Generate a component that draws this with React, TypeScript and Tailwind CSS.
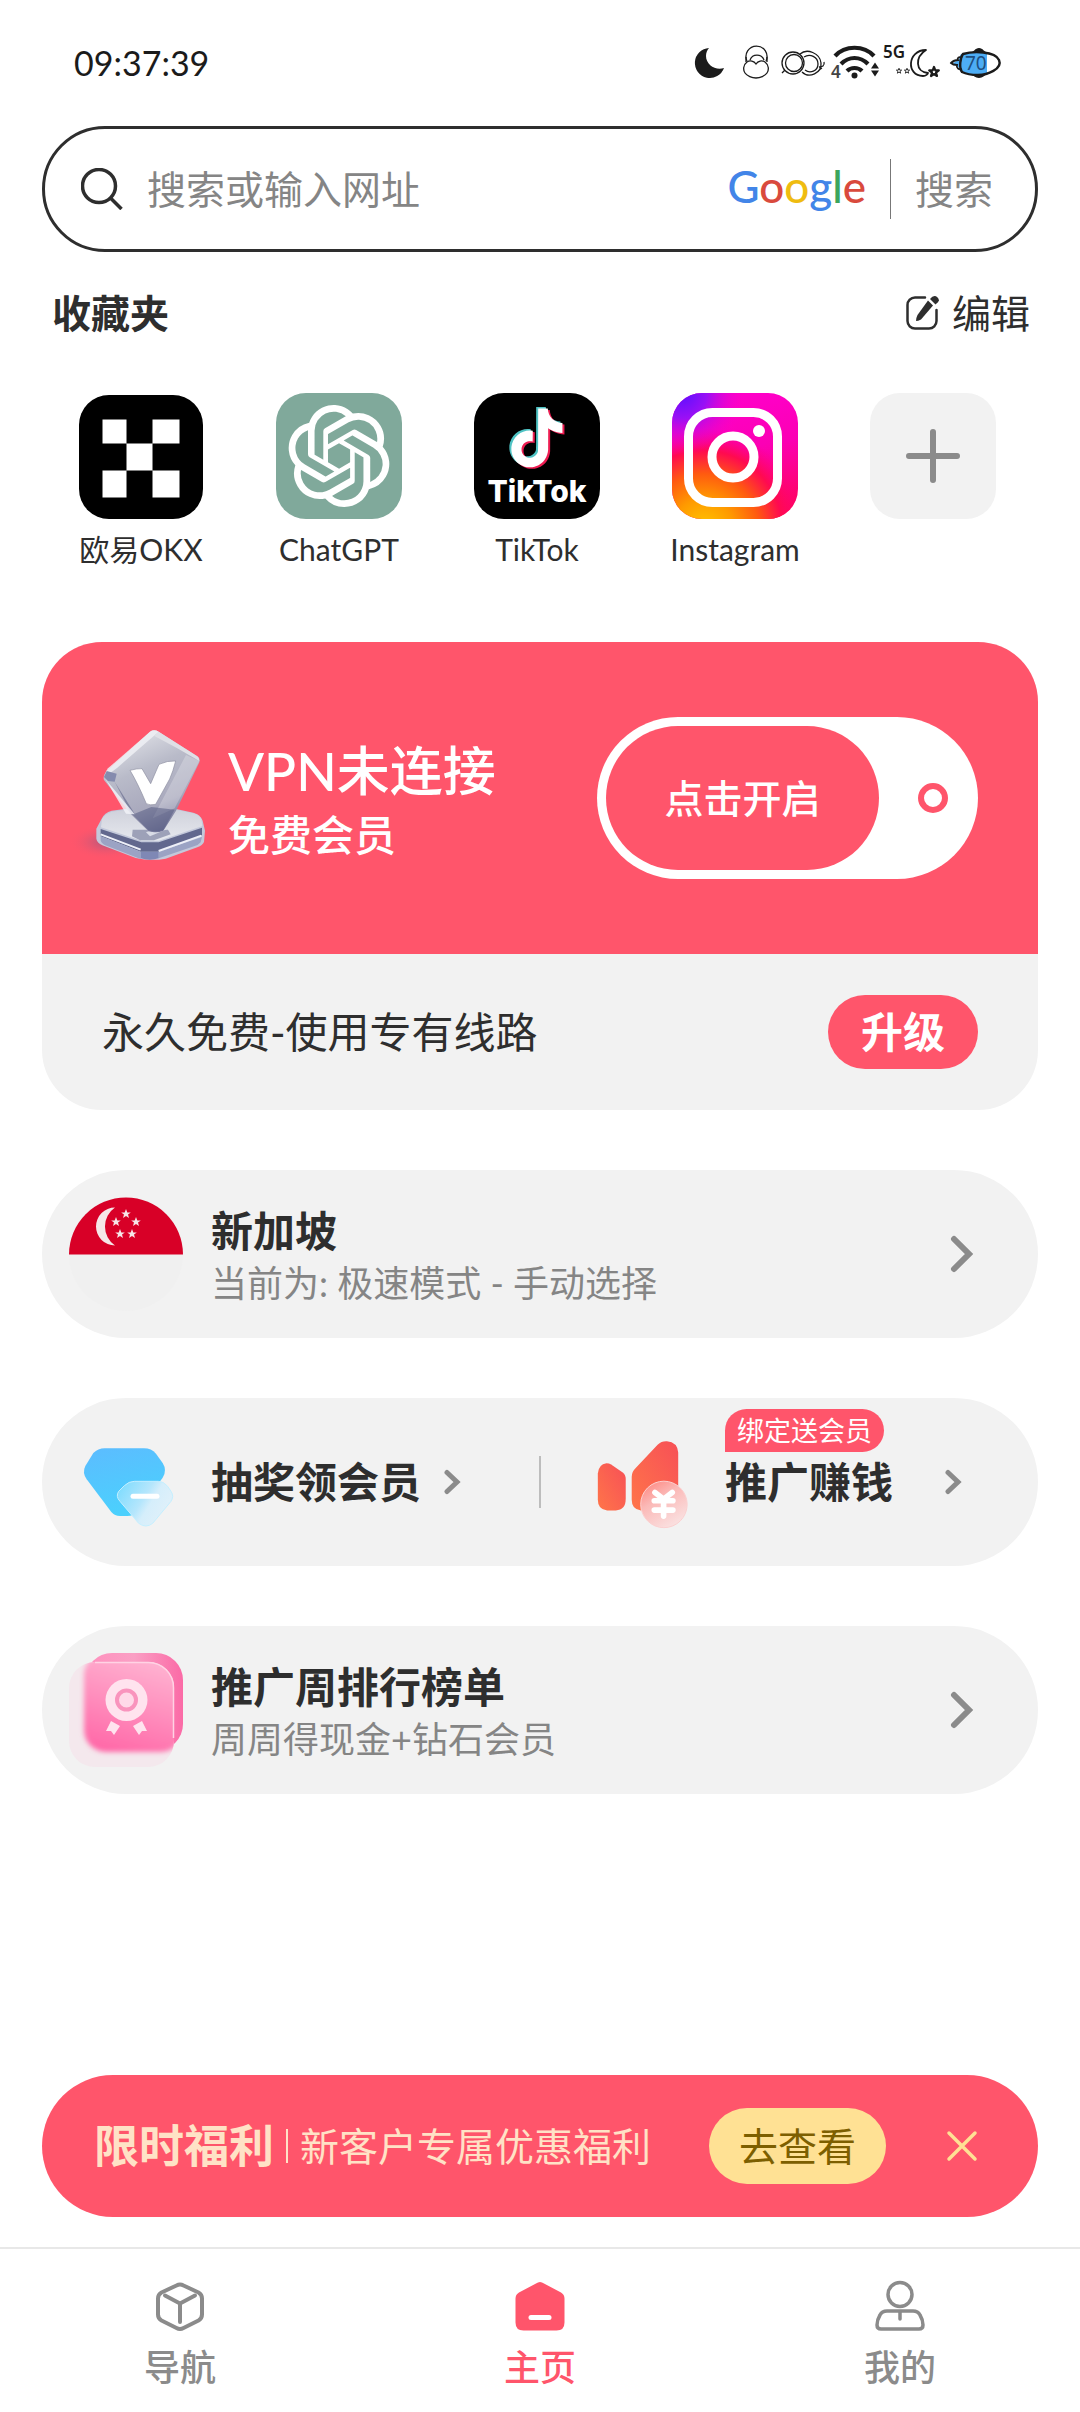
import { useState } from "react";
import type { ReactNode } from "react";
import { SiOpenai } from "react-icons/si";

const NOTE =
  "M12.525.02c1.31-.02 2.61-.01 3.91-.02.08 1.53.63 3.09 1.75 4.17 1.12 1.11 2.7 1.62 4.24 1.79v4.03c-1.44-.05-2.89-.35-4.2-.97-.57-.26-1.1-.59-1.62-.93-.01 2.92.01 5.84-.02 8.75-.08 1.4-.54 2.79-1.35 3.94-1.31 1.92-3.58 3.17-5.91 3.21-1.43.08-2.86-.31-4.08-1.03-2.02-1.19-3.44-3.37-3.65-5.71-.02-.5-.03-1-.01-1.49.18-1.9 1.12-3.72 2.58-4.96 1.66-1.44 3.98-2.13 6.15-1.72.02 1.48-.04 2.96-.04 4.44-.99-.32-2.15-.23-3.02.37-.63.41-1.11 1.04-1.36 1.75-.21.51-.15 1.07-.14 1.61.24 1.64 1.82 3.02 3.5 2.87 1.12-.01 2.19-.66 2.77-1.61.19-.33.4-.67.41-1.06.1-1.79.06-3.57.07-5.36.01-4.03-.01-8.05.02-12.07z";

const STAR = "M0-5 1.3-1.6 4.8-1.6 2 .6 3 4 0 2-3 4-2 .6-4.8-1.6-1.3-1.6z";

function StatusIcons() {
  return (
    <svg width="312" height="52" viewBox="692 36 312 52" fill="none" stroke="#1b1b1b" aria-hidden="true">
      <path d="M709 47a15 15 0 1 0 15 20c-8 3-18-3-18-12 0-3 1-6 3-8z" fill="#1b1b1b" stroke="none" />
      <g strokeWidth="1.3">
        <path d="M747 60a10.500 10.500 0 1 1 19 0M750 59a7.500 7.500 0 0 1 14 0" />
        <path d="M756 63c-2-3-6-4-9-2-4 3-4 8-2 11s7 5 11 5 9-2 11-5 2-8-2-11c-3-2-7-1-9 2z" />
        <path d="M746 56v5M767 56v5" />
        <circle cx="793" cy="62" r="11" />
        <circle cx="794" cy="62" r="8.500" />
        <path d="M800 53c7-6 20-1 21 9s-12 16-19 9M804 56c6-4 14 0 14 7s-8 10-13 6M782 72l3-3M819 66c3 0 6-1 5-5M819 69l3-2" />
      </g>
      <g strokeWidth="4.200">
        <path d="M835 55c10-11 29-11 39 0M841 63c8-8 19-8 27 0M847 70c4-4 11-4 15 0" />
      </g>
      <circle cx="854.500" cy="74.500" r="3" fill="#1b1b1b" stroke="none" />
      <path d="M871 67.500h8l-4-6zM871 69.500h8l-4 6z" fill="#1b1b1b" stroke="none" />
      <path d="M926 49c-19 0-20 26-3 26 3 0 5-2 5-3-13-1-13-16-2-23z" strokeWidth="1.800" strokeLinejoin="round" />
      <path d={STAR} transform="translate(934 71)" strokeWidth="2.200" strokeLinejoin="round" fill="#fff" />
      <path d={STAR} transform="translate(899 70) scale(.55)" strokeWidth="1.600" />
      <path d={STAR} transform="translate(907 70) scale(.55)" strokeWidth="1.600" />
      <path d="M961 53c-3 4-3 14 0 18l9 3h17V52h-17zM961 58l-8 4 8 6z" fill="#4dadf5" stroke="none" />
      <path d="M963 53c10-3 32-3 36 6s-12 15-21 15-14-2-16-3c-3-4-2-14 1-18z" strokeWidth="2.400" />
      <path d="M962 57c-3-2-5 0-4 2-4 0-6 2-7 3 2 2 4 2 6 2-1 3 2 5 5 4" strokeWidth="1.800" />
      <path d="M970 52c4-1 5-5 9-5s5 4 9 5zM970 73c4 1 5 4 9 4s5-3 9-4z" fill="#1b1b1b" stroke="none" />
      <g fill="#1b1b1b" stroke="none" className="font-['Noto_Sans',sans-serif]">
        <text x="883" y="57" fontSize="17" fontWeight="600">5G</text>
        <text x="831" y="77" fontSize="17" fontWeight="600" fill="#444">4</text>
        <text x="965" y="69" fontSize="19" fill="#1d4e80">70</text>
      </g>
    </svg>
  );
}

function OkxIcon() {
  return (
    <svg viewBox="0 0 126 126" className="size-full" aria-hidden="true">
      <rect x="1" y="2" width="124" height="124" rx="30" fill="#000" />
      <path d="M24.500 26.500h24v24h26v-24h27v24h-27v27h27v27h-27v-27h-26v27h-24v-27h24v-27h-24z" fill="#fff" />
    </svg>
  );
}

function ChatIcon() {
  return (
    <span className="flex size-full items-center justify-center rounded-[30px] bg-[#80a99b]">
      <SiOpenai className="size-[102px] text-white" />
    </span>
  );
}

function TikTokIcon() {
  return (
    <span className="flex size-full flex-col items-center rounded-[30px] bg-black pt-3">
      <svg viewBox="36 12 56 64" className="h-16 w-14" aria-hidden="true">
        <path d={NOTE} transform="translate(32.500 14) scale(2.450)" fill="#4fc3c4" />
        <path d={NOTE} transform="translate(36.500 17) scale(2.450)" fill="#ee1d52" />
        <path d={NOTE} transform="translate(34.500 15.500) scale(2.450)" fill="#fff" />
      </svg>
      <span className="font-['Inter',sans-serif] text-[30px] leading-[44px] font-extrabold text-white">TikTok</span>
    </span>
  );
}

function InstagramIcon() {
  return (
    <svg viewBox="0 0 126 126" className="size-full" aria-hidden="true">
      <defs>
        <linearGradient id="igBase" x1=".7" y1="0" x2=".9" y2="1">
          <stop offset="0" stopColor="#ff00c8" />
          <stop offset=".4" stopColor="#fb00b4" />
          <stop offset="1" stopColor="#ff0550" />
        </linearGradient>
        <radialGradient id="igWarm" cx=".25" cy="1.080" r=".8">
          <stop offset="0" stopColor="#ffc800" />
          <stop offset=".3" stopColor="#ff9a00" />
          <stop offset=".55" stopColor="#ff5a10" />
          <stop offset=".78" stopColor="#ff0a50" />
          <stop offset="1" stopColor="#ff0080" stopOpacity="0" />
        </radialGradient>
        <radialGradient id="igCool" cx=".08" cy="0" r=".5">
          <stop offset="0" stopColor="#5a10ff" />
          <stop offset=".4" stopColor="#9a10f5" />
          <stop offset="1" stopColor="#ff00c8" stopOpacity="0" />
        </radialGradient>
      </defs>
      <rect width="126" height="126" rx="30" fill="url(#igBase)" />
      <rect width="126" height="126" rx="30" fill="url(#igWarm)" />
      <rect width="126" height="126" rx="30" fill="url(#igCool)" />
      <g fill="none" stroke="#fff" strokeWidth="9">
        <rect x="16.500" y="19.500" width="89" height="90" rx="24" />
        <circle cx="61" cy="64" r="21" />
      </g>
      <circle cx="87" cy="38" r="6" fill="#fff" />
    </svg>
  );
}

function VpnBadge() {
  return (
    <svg viewBox="90 290 420 411" className="-mt-1.5 h-[137px] w-[140px] shrink-0" aria-hidden="true">
      <defs>
        <linearGradient id="vFace" x1=".2" y1="0" x2=".6" y2="1">
          <stop offset="0" stopColor="#e4e5ea" />
          <stop offset=".4" stopColor="#b9bbc9" />
          <stop offset=".75" stopColor="#a9a9bd" />
          <stop offset="1" stopColor="#6f7296" />
        </linearGradient>
        <linearGradient id="vTop" x1="0" y1="0" x2="0" y2="1">
          <stop offset="0" stopColor="#cfd1db" />
          <stop offset="1" stopColor="#e6e8ee" />
        </linearGradient>
        <radialGradient id="vShade">
          <stop offset="0" stopColor="#8b5a86" stopOpacity=".7" />
          <stop offset="1" stopColor="#ff556b" stopOpacity="0" />
        </radialGradient>
      </defs>
      <ellipse cx="200" cy="635" rx="115" ry="52" fill="url(#vShade)" />
      <path d="M185 565q8-18 30-24l60-8h120l65 14q22 6 28 24l7 30-3 34q-4 10-20 16l-95 34q-44 8-90-2l-100-38q-16-8-18-20v-30z" fill="#c3c8da" />
      <path d="M182 596l122 40h52l130-44v22l-128 50h-56l-120-46z" fill="#62688e" />
      <path d="M182 618l120 46v22l-108-42q-12-8-12-14zM356 664l130-44-4 16q-6 8-20 12l-106 36z" fill="#9ba3c4" />
      <path d="M302 664h54v20q-26 8-54 0z" fill="#7f88b5" />
      <path d="M182 612l120 46M356 662l128-46" stroke="#eef0f8" strokeWidth="6" fill="none" />
      <path d="M186 566q10-16 30-22l60-8h118l66 13q18 5 24 18l3 20-130 44h-52l-122-40z" fill="url(#vTop)" />
      <path d="M278 598h106l8 14-50 18h-42l-24-12z" fill="#9da1b8" />
      <path d="M318 606l54-20 10 10-52 22z" fill="#d9dce6" />
      <path d="M330 304q12-8 26 0l116 74q10 6 6 18l-70 145-38 60q-20 8-44 2l-52-50-82-104q-4-12 6-24z" fill="url(#vFace)" />
      <path d="M330 304q12-8 26 0l-124 108-34 26q-6-10 6-24z" fill="#eff0f5" opacity=".85" />
      <path d="M342 316l14-12 116 74q8 6 6 14-66-40-136-76z" fill="#dfe0e6" />
      <path d="M192 440l8-18 30 8-6 24-20-2z" fill="#858bae" />
      <path d="M478 392l-74 142-66 30 100-190z" fill="#fff" opacity=".24" />
      <path d="M224 454l60 96 50-20 70 8-34 60q-20 8-44 2l-52-50z" fill="#575c84" opacity=".55" />
      <path d="M196 446l88 106-26-2z" fill="#f4f5fa" opacity=".8" />
      <path d="M270 420q22-6 36-5l26 45 25-58q26-12 50-10-8 32-18 54l-42 76q-18 4-28-2-26-62-49-100z" fill="#fff" stroke="#8e90a2" strokeWidth="2" />
    </svg>
  );
}

function FlagIcon() {
  const stars = [[57, 17], [47, 25], [67, 25], [51, 37], [63, 37]];
  return (
    <svg viewBox="0 0 114 114" className="size-[114px] shrink-0" aria-hidden="true">
      <circle cx="57" cy="57" r="57" fill="#f0f0f0" />
      <path d="M0 57.500a57 57 0 0 1 114 0z" fill="#d80027" />
      <path d="M46 10.500a18.500 18.500 0 0 0 0 38a23 23 0 0 1 0-38z" fill="#f6e6e8" />
      {stars.map(([x, y]) => (
        <path key={`${x}-${y}`} d={STAR} transform={`translate(${x} ${y})`} fill="#f6e6e8" />
      ))}
    </svg>
  );
}

function GemIcon() {
  return (
    <svg viewBox="120 165 288 252" className="h-[84px] w-24" aria-hidden="true">
      <defs>
        <linearGradient id="gemBody" x1="0" y1="0" x2=".3" y2="1">
          <stop offset="0" stopColor="#5cbcff" />
          <stop offset="1" stopColor="#4bd0fd" />
        </linearGradient>
        <linearGradient id="gemGlass" x1="0" y1=".2" x2="1" y2=".7">
          <stop offset="0" stopColor="#7fdcfe" />
          <stop offset=".45" stopColor="#b5e6fc" />
          <stop offset=".6" stopColor="#d5eefb" />
          <stop offset="1" stopColor="#e3f1f9" />
        </linearGradient>
      </defs>
      <path d="M160 192q14-14 34-14h118q22 0 36 16l20 28q14 22 0 44l-76 102q-12 13-30 13h-22q-16 0-26-12l-74-98q-14-20-4-40z" fill="url(#gemBody)" />
      <path d="M253 290q14-13 30-13h72q16 0 28 15l10 15q10 15 0 30l-55 66q-20 16-42 0l-56-66q-14-15-4-30z" fill="url(#gemGlass)" stroke="#c5efff" strokeWidth="3" />
      <path d="M279 322h72" stroke="#fff" strokeWidth="15" strokeLinecap="round" />
    </svg>
  );
}

function EarnIcon() {
  return (
    <svg viewBox="160 145 300 280" className="mt-1 h-[93px] w-[100px]" aria-hidden="true">
      <defs>
        <linearGradient id="earnBody" x1="0" y1="1" x2="1" y2="0">
          <stop offset="0" stopColor="#ff7549" />
          <stop offset="1" stopColor="#f75057" />
        </linearGradient>
        <linearGradient id="earnCoin" x1="0" y1="0" x2=".6" y2="1">
          <stop offset="0" stopColor="#ff8078" />
          <stop offset=".45" stopColor="#fbb9b7" />
          <stop offset="1" stopColor="#fadfdf" />
        </linearGradient>
      </defs>
      <path d="M174 252q2-28 26-31 8 0 14 4l35 24q9 7 9 19v60q0 34-30 35h-26q-28-2-28-32z" fill="url(#earnBody)" />
      <path d="M276 262q0-16 12-27l66-70q12-11 28-10 32 3 34 34v174h-112q-28-2-28-32z" fill="url(#earnBody)" />
      <circle cx="373" cy="345" r="70" fill="url(#earnCoin)" stroke="#fbd0d0" strokeWidth="3" />
      <path d="M346 309l26 20 26-20M344 334h56M344 362h56M372 332v48" stroke="#fff" strokeWidth="17" strokeLinecap="round" strokeLinejoin="round" fill="none" />
    </svg>
  );
}

function MedalIcon() {
  return (
    <svg viewBox="0 0 114 114" className="size-[114px] shrink-0" aria-hidden="true">
      <defs>
        <linearGradient id="medBack" x1="0" y1="0" x2="1" y2="0">
          <stop offset="0" stopColor="#ff8fbd" />
          <stop offset=".5" stopColor="#fa9fc4" />
          <stop offset="1" stopColor="#fb6aa6" />
        </linearGradient>
        <linearGradient id="medFront" x1=".6" y1="0" x2=".3" y2="1">
          <stop offset="0" stopColor="#ffb6d3" />
          <stop offset=".5" stopColor="#ff90be" />
          <stop offset="1" stopColor="#ff69a8" />
        </linearGradient>
        <clipPath id="medClip"><rect y="9" width="105" height="105" rx="26" /></clipPath>
        <filter id="medSoft" x="-20%" y="-20%" width="140%" height="140%"><feGaussianBlur stdDeviation="2.500" /></filter>
      </defs>
      <rect x="16" width="98" height="98" rx="27" fill="url(#medBack)" />
      <g clipPath="url(#medClip)">
        <rect y="9" width="105" height="105" fill="#f4e8ed" />
        <rect x="15" y="0" width="99" height="99" rx="22" fill="url(#medFront)" filter="url(#medSoft)" />
      </g>
      <path d="M26 9.500h53a25 25 0 0 1 25.500 25.500v50" fill="none" stroke="#ffd3e4" strokeWidth="1.500" />
      <circle cx="57.500" cy="47" r="21" fill="#ffe3ee" />
      <circle cx="57.500" cy="47" r="9.500" fill="#ffd9e8" stroke="#f994bd" strokeWidth="4" />
      <path d="M42 68l9 5-6 9-3-4-5 0zM73 68l-9 5 6 9 3-4 5 0z" fill="#ffe3ee" />
    </svg>
  );
}

function Chevron({ small = false }: { small?: boolean }) {
  return small ? (
    <svg viewBox="0 0 18 26" className="h-[26px] w-[18px] shrink-0" fill="none" stroke="#8b8b8b" strokeWidth="5" strokeLinecap="round" aria-hidden="true">
      <path d="M4 3.500l10 9.500-10 9.500" />
    </svg>
  ) : (
    <svg viewBox="0 0 24 38" className="h-[38px] w-6 shrink-0" fill="none" stroke="#8b8b8b" strokeWidth="6" strokeLinecap="round" aria-hidden="true">
      <path d="M4 4l15 15-15 15" />
    </svg>
  );
}

const favorites: { name: string; icon: ReactNode }[] = [
  { name: "欧易OKX", icon: <OkxIcon /> },
  { name: "ChatGPT", icon: <ChatIcon /> },
  { name: "TikTok", icon: <TikTokIcon /> },
  { name: "Instagram", icon: <InstagramIcon /> },
];

function InfoRow({ icon, title, detail }: { icon: ReactNode; title: string; detail: string }) {
  return (
    <a href="#" className="flex min-h-[168px] items-center gap-7 rounded-full bg-[#f2f2f2] pr-16 pl-[27px]">
      {icon}
      <span className="flex flex-1 flex-col pt-1">
        <span className="text-[42px] leading-[54px] font-bold">{title}</span>
        <span className="text-[36px] leading-[50px] text-[#858585]">{detail}</span>
      </span>
      <Chevron />
    </a>
  );
}

const tabs: { name: string; active?: boolean; icon: ReactNode }[] = [
  {
    name: "导航",
    icon: (
      <g fill="none" stroke="currentColor" strokeWidth="4" strokeLinecap="round" strokeLinejoin="round">
        <path d="M21.500 4.500q3.500-2 7 0l15 7q3.500 2 3.500 6v16q0 4-3.500 6l-15 7.500q-3.500 2-7 0l-15-7.500q-3.500-2-3.500-6v-16q0-4 3.500-6z" />
        <path d="M10 14.500l15 8 15-8M25 23v18" />
      </g>
    ),
  },
  {
    name: "主页",
    active: true,
    icon: (
      <>
        <path d="M21 2.500q4-3 8 0l17 9q3.500 2 3.500 6v24q0 8-8 8h-33q-8 0-8-8v-24q0-4 3.500-6z" fill="currentColor" />
        <path d="M16 36.500h18" stroke="#fff" strokeWidth="5" strokeLinecap="round" />
      </>
    ),
  },
  {
    name: "我的",
    icon: (
      <g fill="none" stroke="currentColor" strokeWidth="3.500" strokeLinecap="round" strokeLinejoin="round">
        <circle cx="25" cy="12" r="12" transform="translate(0 1.500)" />
        <path d="M12 30h26q5 0 7 4q3 5 3 10q0 4-4 4h-38q-4 0-4-4q0-5 3-10q2-4 7-4zM25 31v7" />
      </g>
    ),
  },
];

export default function App() {
  const [on, setOn] = useState(false);
  return (
    <div className="flex min-h-screen flex-col bg-white font-['Lato','Noto_Sans_CJK_SC',sans-serif] text-[#2e2e2e]">
      <header className="flex h-[126px] items-center justify-between pr-[76px] pl-[74px]">
        <time className="text-[34px] leading-10 text-[#1b1b1b]">09:37:39</time>
        <StatusIcons />
      </header>

      <main className="flex flex-1 flex-col px-[42px]">
        <form className="flex h-[126px] items-center rounded-full border-3 border-[#2e2e2e] pr-[42px] pl-9" onSubmit={(e) => e.preventDefault()}>
          <svg viewBox="0 0 42 42" className="size-[42px] shrink-0" fill="none" stroke="#2e2e2e" strokeWidth="3.500" aria-hidden="true">
            <circle cx="18" cy="18" r="16.500" />
            <path d="M29.500 30l11 11" />
          </svg>
          <input
            aria-label="搜索或输入网址"
            placeholder="搜索或输入网址"
            className="ml-6 min-w-0 flex-1 bg-transparent text-[39px] leading-[60px] outline-none placeholder:text-[#858585] placeholder:opacity-100"
          />
          <span className="mr-6 pb-1.5 text-[44px] leading-[60px] font-medium text-[#4285e8]" aria-label="Google">
            G<span className="text-[#d94a3d]">o</span><span className="text-[#efbc10]">o</span>g
            <span className="text-[#3ca55c]">l</span><span className="text-[#d94a3d]">e</span>
          </span>
          <span className="h-[60px] w-px bg-[#777]" />
          <button type="submit" className="ml-6 text-[39px] leading-[60px] text-[#858585]">搜索</button>
        </form>

        <div className="mt-[31px] flex items-center justify-between pr-2 pl-[10px]">
          <h2 className="text-[39px] leading-[60px] font-bold">收藏夹</h2>
          <button type="button" className="flex items-center gap-3 text-[39px] leading-[60px]">
            <svg viewBox="0 0 34 36" className="h-9 w-[34px]" fill="none" stroke="#2e2e2e" strokeWidth="2.500" strokeLinecap="round" aria-hidden="true">
              <path d="M19 2.500H9a7.500 7.500 0 0 0-7.500 7.500v16a7.500 7.500 0 0 0 7.500 7.500h14a7.500 7.500 0 0 0 7.500-7.500V15" />
              <path d="M22 5.500l5 5-12 14q-3 1.500-5 1.500 0-3 1.500-6z" fill="#2e2e2e" stroke="none" />
              <path d="M24 4q4-5 7.500-1.500t-2 7z" fill="#2e2e2e" stroke="none" />
            </svg>
            编辑
          </button>
        </div>

        <ul className="mt-[50px] grid grid-cols-5 pr-1.5">
          {favorites.map((f) => (
            <li key={f.name}>
              <a href="#" className="flex flex-col items-center gap-1.5">
                <span className="size-[126px]">{f.icon}</span>
                <span className="text-[30px] leading-[48px]">{f.name}</span>
              </a>
            </li>
          ))}
          <li className="flex flex-col items-center">
            <button type="button" aria-label="添加" className="flex size-[126px] items-center justify-center rounded-[30px] bg-[#f2f2f2]">
              <svg viewBox="0 0 54 54" className="size-[54px]" stroke="#8b8b8b" strokeWidth="6" strokeLinecap="round" aria-hidden="true">
                <path d="M27 3v48M3 27h48" />
              </svg>
            </button>
          </li>
        </ul>

        <section className="mt-[69px] overflow-hidden rounded-[60px] bg-[#f2f2f2]">
          <div className="flex min-h-[312px] items-center bg-[#ff556b] pr-15 pl-7 text-white">
            <VpnBadge />
            <div className="ml-[18px] flex-1 pt-1.5">
              <h1 className="text-[53px] leading-[68px] font-medium">VPN未连接</h1>
              <p className="text-[42px] leading-[60px] font-medium">免费会员</p>
            </div>
            <button
              type="button"
              role="switch"
              aria-checked={on}
              onClick={() => setOn(!on)}
              className="flex h-[162px] w-[381px] items-center justify-between rounded-full bg-white py-[9px] pr-[30px] pl-[9px]"
            >
              <span className="flex h-36 w-[273px] items-center justify-center rounded-full bg-[#ff556b] text-[39px] font-medium">点击开启</span>
              <span className="size-[30px] rounded-full border-6 border-[#ff556b]" />
            </button>
          </div>
          <div className="flex min-h-[156px] items-center justify-between pr-15 pl-15">
            <p className="text-[42px] leading-[60px]">永久免费-使用专有线路</p>
            <button type="button" className="h-[74px] w-[150px] rounded-full bg-[#ff556b] text-[42px] leading-[60px] font-bold text-white">升级</button>
          </div>
        </section>

        <div className="mt-15 flex flex-col gap-15">
          <InfoRow icon={<FlagIcon />} title="新加坡" detail="当前为: 极速模式 - 手动选择" />

          <div className="grid min-h-[168px] grid-cols-[1fr_auto_1fr] items-center rounded-full bg-[#f2f2f2] text-[42px] leading-[60px] font-bold">
            <a href="#" className="flex items-center pl-[27px]">
              <span className="flex w-[114px] justify-center pt-2 pl-1"><GemIcon /></span>
              <span className="ml-7">抽奖领会员</span>
              <span className="ml-[22px]"><Chevron small /></span>
            </a>
            <span className="h-[52px] w-0.5 bg-[#bdbdbd]" />
            <a href="#" className="flex items-center pr-[76px] pl-[52px]">
              <EarnIcon />
              <span className="relative ml-8">
                推广赚钱
                <span className="absolute bottom-full left-0 rounded-[22px] rounded-bl-none bg-[#ff556b] px-3 text-[27px] leading-[43px] font-normal whitespace-nowrap text-white">
                  绑定送会员
                </span>
              </span>
              <span className="ml-auto"><Chevron small /></span>
            </a>
          </div>

          <InfoRow icon={<MedalIcon />} title="推广周排行榜单" detail="周周得现金+钻石会员" />
        </div>

        <aside className="mt-auto mb-[30px] flex min-h-[142px] items-center rounded-full bg-[#ff556b] pr-15 pl-[52px] text-[#ffe2c6]">
          <strong className="text-[45px] leading-[60px] font-bold">限时福利</strong>
          <span className="mx-3 h-[34px] w-0.5 bg-[#ffe2c6]" />
          <span className="text-[39px] leading-[60px]">新客户专属优惠福利</span>
          <button type="button" className="ml-auto h-[76px] w-[177px] rounded-full bg-[#ffe194] text-[39px] leading-[60px] text-[#7d5f00]">去查看</button>
          <button type="button" aria-label="关闭" className="ml-15">
            <svg viewBox="0 0 32 32" className="size-8" stroke="#ffe194" strokeWidth="3.500" strokeLinecap="round" aria-hidden="true">
              <path d="M3 3l26 26M29 3L3 29" />
            </svg>
          </button>
        </aside>
      </main>

      <nav className="grid grid-cols-3 border-t-2 border-[#e8e8e8] pt-8 pb-[21px]">
        {tabs.map((t) => (
          <a key={t.name} href="#" className={t.active ? "flex flex-col items-center gap-3 text-[#ff556b]" : "flex flex-col items-center gap-3 text-[#8b8b8b]"}>
            <svg viewBox="0 0 50 50" className="size-[50px] overflow-visible" aria-hidden="true">{t.icon}</svg>
            <span className="text-[36px] leading-[48px] font-medium">{t.name}</span>
          </a>
        ))}
      </nav>
    </div>
  );
}
